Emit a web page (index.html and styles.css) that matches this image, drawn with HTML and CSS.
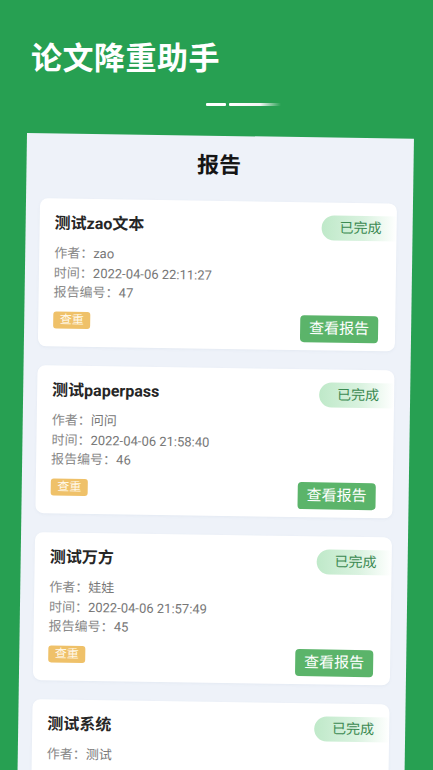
FILE: index.html
```html
<!DOCTYPE html>
<html lang="zh-CN">
<head>
<meta charset="utf-8">
<title>论文降重助手</title>
<link rel="stylesheet" href="styles.css">
</head>
<body>
<div class="page">
  <h1 class="app-title">论文降重助手</h1>
  <div class="deco">
    <span class="dash dash-a"></span>
    <span class="dash dash-b"></span>
  </div>
  <section class="panel">
    <h2 class="panel-title">报告</h2>
    <div class="list">
      <article class="card">
        <div class="card-head">
          <h3 class="card-title">测试zao文本</h3>
          <span class="status">已完成</span>
        </div>
        <ul class="meta">
          <li><span class="label">作者：</span>zao</li>
          <li><span class="label">时间：</span>2022-04-06 22:11:27</li>
          <li><span class="label">报告编号：</span>47</li>
        </ul>
        <div class="card-foot">
          <span class="tag">查重</span>
          <span class="btn">查看报告</span>
        </div>
      </article>
      <article class="card">
        <div class="card-head">
          <h3 class="card-title">测试paperpass</h3>
          <span class="status">已完成</span>
        </div>
        <ul class="meta">
          <li><span class="label">作者：</span>问问</li>
          <li><span class="label">时间：</span>2022-04-06 21:58:40</li>
          <li><span class="label">报告编号：</span>46</li>
        </ul>
        <div class="card-foot">
          <span class="tag">查重</span>
          <span class="btn">查看报告</span>
        </div>
      </article>
      <article class="card">
        <div class="card-head">
          <h3 class="card-title">测试万方</h3>
          <span class="status">已完成</span>
        </div>
        <ul class="meta">
          <li><span class="label">作者：</span>娃娃</li>
          <li><span class="label">时间：</span>2022-04-06 21:57:49</li>
          <li><span class="label">报告编号：</span>45</li>
        </ul>
        <div class="card-foot">
          <span class="tag">查重</span>
          <span class="btn">查看报告</span>
        </div>
      </article>
      <article class="card">
        <div class="card-head">
          <h3 class="card-title">测试系统</h3>
          <span class="status">已完成</span>
        </div>
        <ul class="meta">
          <li><span class="label">作者：</span>测试</li>
        </ul>
      </article>
    </div>
  </section>
</div>
</body>
</html>
```
FILE: styles.css
```css
* { box-sizing: border-box; }
html, body {
  margin: 0;
  padding: 0;
  width: 433px;
  height: 770px;
  overflow: hidden;
  background: #27a052;
}
.page {
  width: 433px;
  height: 770px;
  overflow: hidden;
  background: #27a052;
  font-family: Roboto, "Noto Sans CJK SC", sans-serif;
  padding-top: 36px;
}
.app-title {
  margin: 0 0 0 31px;
  font-family: "Noto Sans CJK SC", sans-serif;
  font-size: 31px;
  line-height: 40px;
  font-weight: 700;
  color: #ffffff;
  letter-spacing: 0.5px;
}
.deco {
  display: flex;
  gap: 3px;
  margin: 27px 0 0 206px;
  height: 3px;
}
.dash {
  height: 3px;
  border-radius: 1px;
  background: #ffffff;
}
.dash-a { width: 20px; }
.dash-b {
  width: 52px;
  background: linear-gradient(90deg, #ffffff 0%, #f4f4f4 60%, rgba(255,255,255,0) 100%);
}
.panel {
  margin: 27px 0 0 27px;
  width: 387px;
  height: 720px;
  background: #eef2f9;
  transform: rotate(0.85deg);
  transform-origin: top left;
  padding: 10px 16px 0 14px;
}
.panel-title {
  margin: 0;
  text-align: center;
  font-family: "Noto Sans CJK SC", sans-serif;
  font-size: 22px;
  line-height: 34px;
  font-weight: 700;
  color: #151515;
}
.list {
  margin-top: 21px;
  display: flex;
  flex-direction: column;
  gap: 19px;
}
.card {
  background: #ffffff;
  border-radius: 8px;
  height: 148px;
  padding: 13px 17px 0 15px;
  box-shadow: 0 1px 3px rgba(120, 140, 170, 0.08);
  overflow: hidden;
}
.card-head {
  display: flex;
  align-items: center;
  justify-content: space-between;
  height: 24px;
}
.card-title {
  margin: 0;
  font-size: 16px;
  line-height: 22px;
  font-weight: 700;
  color: #262626;
}
.status {
  margin-right: -17px;
  width: 75px;
  height: 25px;
  line-height: 25px;
  padding-left: 18px;
  border-radius: 13px 0 0 13px;
  background: linear-gradient(90deg, #bfe9c9 0%, #d9f2df 55%, rgba(255,255,255,0) 100%);
  color: #3c8a52;
  font-size: 14px;
}
.meta {
  list-style: none;
  margin: 8px 0 0;
  padding: 0;
  font-size: 13px;
  line-height: 19.5px;
  color: #777777;
}
.label { color: #888888; }
.card-foot {
  margin-top: 9px;
  display: flex;
  justify-content: space-between;
  align-items: flex-start;
}
.tag {
  width: 37px;
  height: 17px;
  line-height: 17px;
  text-align: center;
  font-size: 12px;
  color: #fff8e8;
  background: #efc169;
  border-radius: 3px;
}
.btn {
  width: 78px;
  height: 27px;
  line-height: 27px;
  text-align: center;
  font-size: 15px;
  color: #ffffff;
  background: #5bb46a;
  border-radius: 4px;
}
```
